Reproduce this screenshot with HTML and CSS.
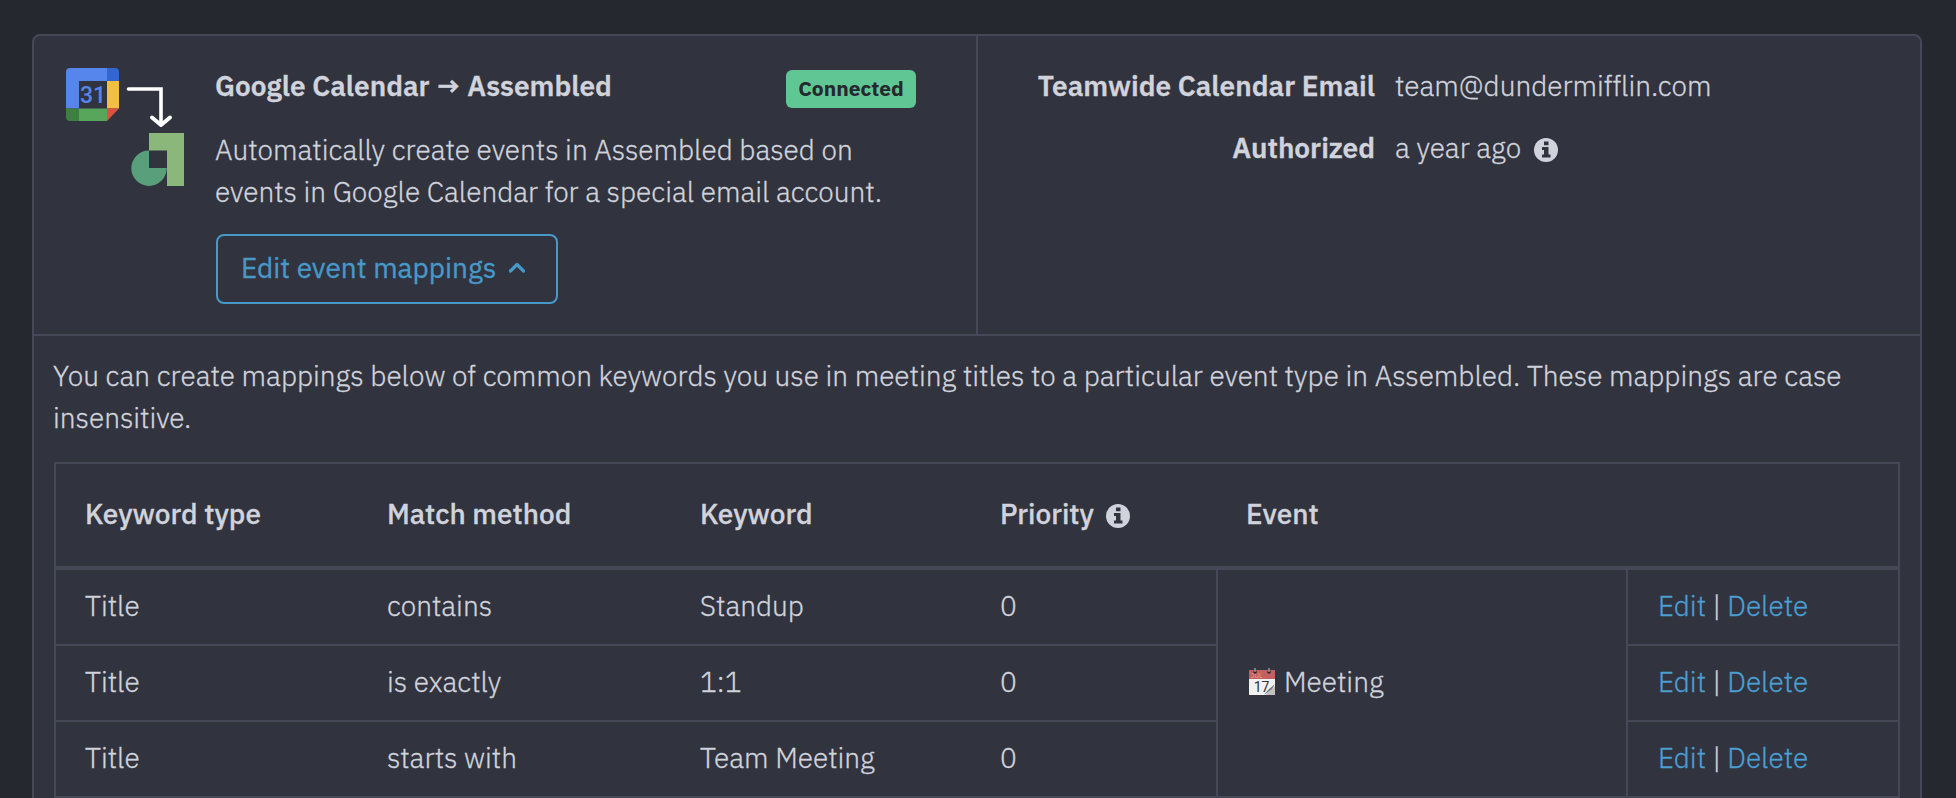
FILE: index.html
```
<!DOCTYPE html>
<html lang="en">
<head>
    <meta charset="UTF-8">
    <meta name="viewport" content="width=device-width, initial-scale=1.0">
    <title>Calendar Integration</title>
    <link rel="stylesheet" href="styles.css">
</head>
<body>
    <div class="card">
        <div class="card-top">
            <div class="summary">
                <svg class="sync-icon" width="118" height="118" viewBox="0 0 118 118">
                    <!-- Google Calendar -->
                    <path fill="#5686ec" d="M4 0H41V13H13V40.500H0V4a4 4 0 0 1 4-4z"/>
                    <path fill="#3367cf" d="M41 0h8a4 4 0 0 1 4 4v9H41z"/>
                    <path fill="#f3bf42" d="M41 13H53V40.500H41z"/>
                    <path fill="#dc523f" d="M41 40.500H53L41 53z"/>
                    <path fill="#58a65c" d="M13 40.500H41V53H13z"/>
                    <path fill="#3d8041" d="M0 40.500H13V53H4a4 4 0 0 1-4-4z"/>
                    <text class="day" x="27" y="35" text-anchor="middle">31</text>
                    <!-- arrow -->
                    <path fill="none" stroke="#fff" stroke-width="3.600" stroke-linecap="round" d="M62.500 21H95V56"/>
                    <path fill="none" stroke="#fff" stroke-width="4" stroke-linecap="round" stroke-linejoin="round" d="M86 49.500L95 57L104 49.500"/>
                    <!-- Assembled -->
                    <path fill="#8bb87a" d="M83 65h35v53h-17V82.500H83z"/>
                    <path fill="#5a9f7b" d="M83 82.500V100h17.700A17.700 17.700 0 1 1 83 82.500z"/>
                </svg>
                <div class="summary-text">
                    <div class="title-row">
                        <div class="title">Google Calendar → Assembled</div>
                        <span class="badge">Connected</span>
                    </div>
                    <p class="description">Automatically create events in Assembled based on<br>events in Google Calendar for a special email account.</p>
                    <button class="btn" type="button">Edit event mappings
                        <svg width="18" height="12" viewBox="0 0 18 12"><path fill="none" stroke="#4799c9" stroke-width="3.200" stroke-linecap="round" stroke-linejoin="round" d="M2.500 9L9 2.500l6.500 6.500"/></svg>
                    </button>
                </div>
            </div>
            <div class="details">
                <div class="detail-label">Teamwide Calendar Email</div>
                <div class="detail-value">team@dundermifflin.com</div>
                <div class="detail-label">Authorized</div>
                <div class="detail-value">a year ago
                    <svg class="info" viewBox="0 0 24 24"><circle cx="12" cy="12" r="12" fill="#d1d3dc"/><path fill="#31343e" d="M10 3.500h4.500v3.800H10zM8 9h6.500v7.500H16.500V19.500H8V16.500H10V12H8z"/></svg>
                </div>
            </div>
        </div>
        <div class="mappings">
            <p class="intro">You can create mappings below of common keywords you use in meeting titles to a particular event type in Assembled. These mappings are case<br>insensitive.</p>
            <table class="mapping-table">
                <colgroup>
                    <col class="col-type"><col class="col-method"><col class="col-keyword"><col class="col-priority"><col class="col-event"><col class="col-actions">
                </colgroup>
                <thead>
                    <tr>
                        <th>Keyword type</th>
                        <th>Match method</th>
                        <th>Keyword</th>
                        <th>Priority
                            <svg class="info" viewBox="0 0 24 24"><circle cx="12" cy="12" r="12" fill="#d1d3dc"/><path fill="#31343e" d="M10 3.500h4.500v3.800H10zM8 9h6.500v7.500H16.500V19.500H8V16.500H10V12H8z"/></svg>
                        </th>
                        <th class="event-head">Event</th>
                        <th></th>
                    </tr>
                </thead>
                <tbody>
                    <tr>
                        <td>Title</td>
                        <td>contains</td>
                        <td>Standup</td>
                        <td>0</td>
                        <td class="event" rowspan="3">
                            <div class="event-name">
                                <svg width="28" height="28" viewBox="0 0 28 28">
                                    <path fill="#f1f1f1" d="M1 10h26v17H1z"/>
                                    <path fill="#c4605f" d="M1 2h26v9H1z"/>
                                    <text class="emoji-month" x="3" y="10">JUL</text>
                                    <circle cx="7" cy="4" r="1.800" fill="#25282f"/>
                                    <circle cx="21" cy="4" r="1.800" fill="#25282f"/>
                                    <path stroke="#c9c9c9" d="M7 0v4M21 0v4"/>
                                    <path fill="#c2c2c2" d="M27 18v9H17z"/>
                                    <path fill="#777" d="M27 16l-3 5-8 6 4-5z"/>
                                    <text class="emoji-day" x="13.500" y="24" text-anchor="middle">17</text>
                                </svg>
                                <span>Meeting</span>
                            </div>
                        </td>
                        <td class="actions"><a href="#">Edit</a> | <a href="#">Delete</a></td>
                    </tr>
                    <tr>
                        <td>Title</td>
                        <td>is exactly</td>
                        <td>1:1</td>
                        <td>0</td>
                        <td class="actions"><a href="#">Edit</a> | <a href="#">Delete</a></td>
                    </tr>
                    <tr>
                        <td>Title</td>
                        <td>starts with</td>
                        <td>Team Meeting</td>
                        <td>0</td>
                        <td class="actions"><a href="#">Edit</a> | <a href="#">Delete</a></td>
                    </tr>
                </tbody>
            </table>
        </div>
    </div>
</body>
</html>
```
FILE: styles.css
```
* {
    box-sizing: border-box;
}
body {
    margin: 0;
    padding: 34px 34px 0 32px;
    height: 798px;
    overflow: hidden;
    background-color: #25282f;
    color: #d1d3dc;
    font-family: "IBM Plex Sans", Roboto, sans-serif;
    font-size: 28px;
    font-weight: 300;
    line-height: 42px;
    -webkit-text-stroke: 0.3px;
}
p {
    margin: 0;
}
svg text {
    -webkit-text-stroke: 0;
}
.card {
    height: 800px;
    background-color: #31343e;
    border: 2px solid #454857;
    border-radius: 8px;
}
.card-top {
    display: flex;
    height: 300px;
    border-bottom: 2px solid #454857;
}
.summary {
    display: flex;
    gap: 31px;
    width: 944px;
    padding: 29px 60px 0 32px;
    border-right: 2px solid #454857;
}
.sync-icon {
    flex: none;
    margin-top: 3px;
}
.day {
    fill: #5686ec;
    font-family: Roboto, sans-serif;
    font-size: 23px;
    font-weight: 500;
}
.summary-text {
    flex: 1;
}
.title-row {
    display: flex;
    justify-content: space-between;
    height: 42px;
    margin-bottom: 22px;
}
.title, .detail-label {
    font-weight: 600;
}
.badge {
    width: 130px;
    height: 38px;
    margin-top: 5px;
    border-radius: 6px;
    background-color: #60c794;
    color: #25282f;
    font-size: 21px;
    font-weight: 700;
    line-height: 37px;
    text-align: center;
    -webkit-text-stroke: 0;
}
.description {
    white-space: nowrap;
}
.btn {
    display: flex;
    align-items: center;
    gap: 12px;
    width: 342px;
    height: 70px;
    margin: 21px 0 0 1px;
    padding: 0 0 2px 23px;
    border: 2px solid #4799c9;
    border-radius: 8px;
    background: none;
    color: #4799c9;
    font: inherit;
    font-weight: 400;
    cursor: pointer;
}
.details {
    display: grid;
    grid-template-columns: 397px 1fr;
    grid-auto-rows: 42px;
    gap: 20px;
    padding-top: 29px;
}
.detail-label {
    text-align: right;
    white-space: nowrap;
}
.info {
    width: 24px;
    height: 24px;
    margin-left: 6px;
    vertical-align: -4px;
}
th .info {
    margin-left: 5px;
}
.mappings {
    padding: 19px 20px 0;
}
.intro {
    margin: 0 0 23px -1px;
    white-space: nowrap;
}
.mapping-table {
    width: 1846px;
    table-layout: fixed;
    border: 2px solid #454857;
    border-bottom: none;
    border-spacing: 0;
}
.col-type {
    width: 302px;
}
.col-method {
    width: 313px;
}
.col-keyword {
    width: 300px;
}
.col-priority {
    width: 245px;
}
.col-event {
    width: 410px;
}
.col-actions {
    width: 272px;
}
th, td {
    padding: 0 29px 2px;
    text-align: left;
    vertical-align: middle;
    white-space: nowrap;
}
th {
    height: 106px;
    border-bottom: 4px solid #454857;
    font-weight: 500;
}
td {
    height: 76px;
    border-bottom: 2px solid #454857;
}
.event-head, .event, .actions {
    padding-left: 30px;
}
.event, .actions {
    border-left: 2px solid #454857;
}
.event-name {
    display: flex;
    align-items: center;
    gap: 8px;
}
.emoji-month {
    fill: #e6b3b2;
    font-size: 7px;
}
.emoji-day {
    fill: #333;
    font-family: Roboto, sans-serif;
    font-size: 14px;
    font-weight: 400;
}
a {
    color: #4b9fd3;
    text-decoration: none;
}
```
